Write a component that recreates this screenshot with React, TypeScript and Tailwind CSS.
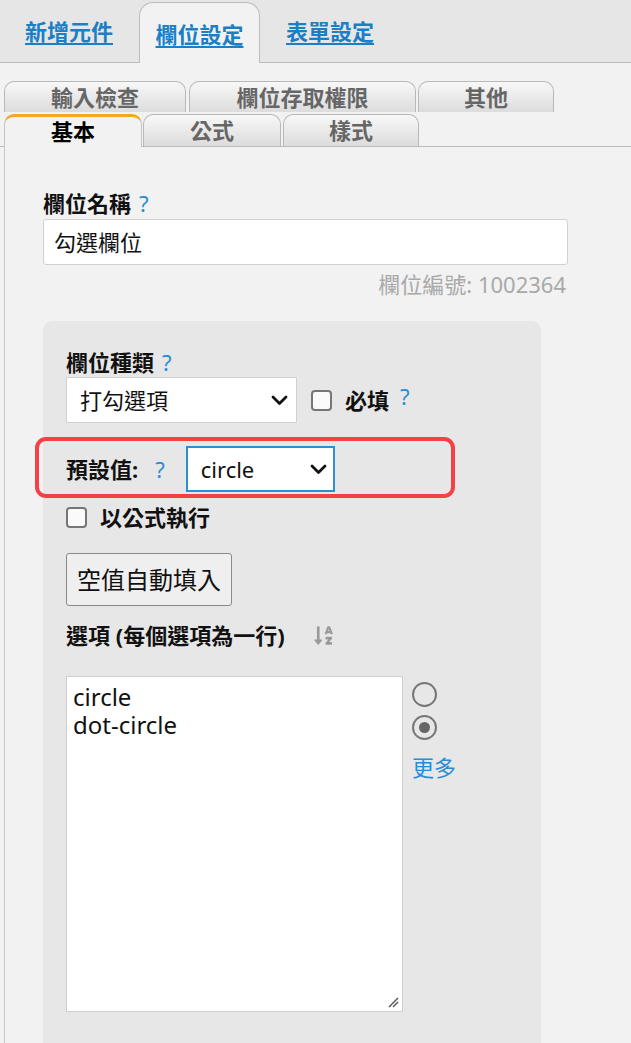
import { FaSortAlphaDown } from "react-icons/fa";

const Help = ({ className = "" }: { className?: string }) => (
  <span className={`text-[#2a8dd4] font-normal ${className}`}>?</span>
);

const Chevron = () => (
  <svg width="17" height="11" viewBox="0 0 17 11" className="shrink-0">
    <polyline
      points="2,2 8.5,8.5 15,2"
      fill="none"
      stroke="#111"
      strokeWidth="2.8"
      strokeLinecap="round"
      strokeLinejoin="round"
    />
  </svg>
);

const Checkbox = () => (
  <div className="w-[21px] h-[21px] rounded-[4px] border-2 border-[#767676] bg-[#fafafa] shrink-0" />
);

function SubTab({ label, w }: { label: string; w: string }) {
  return (
    <div
      className={`${w} h-full border border-b-0 border-[#b8b8b8] rounded-t-[10px] bg-linear-to-b from-[#f8f8f8] to-[#dcdcdc] text-[#666] font-bold text-[22px] leading-[30px] text-center`}
    >
      {label}
    </div>
  );
}

export default function App() {
  return (
    <div className="w-[631px] h-[1043px] overflow-hidden bg-[#f2f2f2] font-['Noto_Sans','Noto_Sans_CJK_TC',sans-serif] text-[#111]">
      {/* top tabs */}
      <div className="h-[63px] bg-[#e6e6e6] border-b border-[#bdbdbd] flex items-end pl-[25px]">
        <a className="mb-[17px] text-[22px] leading-[28px] font-semibold text-[#1a7fc4] underline underline-offset-[3px]">
          新增元件
        </a>
        <div className="ml-[26px] w-[121px] h-[61px] mb-[-1px] bg-[#f2f2f2] border border-b-0 border-[#bdbdbd] rounded-t-[14px] flex justify-center">
          <a className="mt-[17px] text-[22px] leading-[28px] font-semibold text-[#1a7fc4] underline underline-offset-[3px]">
            欄位設定
          </a>
        </div>
        <a className="ml-[26px] mb-[17px] text-[22px] leading-[28px] font-semibold text-[#1a7fc4] underline underline-offset-[3px]">
          表單設定
        </a>
      </div>

      {/* sub tabs */}
      <div className="mt-[18px] h-[31px] flex pl-[4px]">
        <SubTab label="輸入檢查" w="w-[182px]" />
        <div className="w-[3px]" />
        <SubTab label="欄位存取權限" w="w-[227px]" />
        <div className="w-[2px]" />
        <SubTab label="其他" w="w-[136px]" />
      </div>
      <div className="mt-[2px] h-[33px] flex items-end pl-[4px] border-b border-[#bbb]">
        <div className="relative w-[138px] h-[33px] mb-[-1px] border border-b-0 border-[#c4c4c4] border-t-[3px] border-t-[#f5a623] rounded-t-[10px] bg-[#f2f2f2] font-bold text-[22px] leading-[28px] text-center text-black">
          基本
        </div>
        <div className="w-[1px]" />
        <div className="h-[32px] flex">
          <SubTab label="公式" w="w-[138px]" />
        </div>
        <div className="w-[2px]" />
        <div className="h-[32px] flex">
          <SubTab label="樣式" w="w-[136px]" />
        </div>
      </div>

      {/* content */}
      <div className="ml-[4px] border-l border-[#c8c8c8] pl-[38px] pt-[42px] h-[900px]">
        <div className="flex items-center gap-[8px] font-bold text-[22px] leading-[28px]">
          欄位名稱 <Help />
        </div>
        <div className="mt-[2px] w-[525px] h-[46px] bg-white border border-[#d0d0d0] rounded-[3px] flex items-center pl-[10px] text-[22px]">
          勾選欄位
        </div>
        <div className="w-[525px] mt-[7px] pr-[2px] text-right text-[22px] leading-[24px] text-[#a9a9a9]">
          欄位編號: 1002364
        </div>

        {/* gray panel */}
        <div className="mt-[25px] w-[498px] h-[760px] bg-[#e7e7e7] rounded-[9px] pl-[23px] pt-[27px]">
          <div className="flex items-center gap-[8px] font-bold text-[22px] leading-[28px]">
            欄位種類 <Help />
          </div>
          <div className="mt-[1px] flex items-center">
            <div className="w-[231px] h-[46px] bg-white border border-[#d2d2d2] flex items-center justify-between pl-[13px] pr-[8px] text-[22px]">
              打勾選項
              <Chevron />
            </div>
            <div className="ml-[14px]">
              <Checkbox />
            </div>
            <span className="ml-[13px] font-bold text-[22px] leading-[28px]">必填</span>
            <Help className="ml-[11px] text-[22px] leading-[28px] -translate-y-[4px]" />
          </div>

          <div className="relative mt-[23px] h-[46px] flex items-center">
            <div className="absolute left-[-31px] top-[-9px] w-[420px] h-[61px] border-4 border-[#f24245] rounded-[11px] pointer-events-none" />
            <span className="font-bold text-[22px] leading-[28px]">預設值:</span>
            <Help className="ml-[17px] text-[22px] leading-[28px]" />
            <div className="ml-[21px] w-[149px] h-[46px] bg-white border-2 border-[#2b8fd3] flex items-center justify-between pl-[13px] pr-[6px] text-[22px]">
              circle
              <Chevron />
            </div>
          </div>

          <div className="mt-[11px] h-[28px] flex items-center">
            <Checkbox />
            <span className="ml-[13px] font-bold text-[22px] leading-[28px]">以公式執行</span>
          </div>

          <button className="mt-[22px] w-[166px] h-[53px] bg-[#efefef] border border-[#8a8a8a] rounded-[3px] text-[24px] leading-[30px] text-[#111]">
            空值自動填入
          </button>

          <div className="mt-[15px] h-[28px] flex items-center">
            <span className="font-bold text-[22px] leading-[28px]">選項 (每個選項為一行)</span>
            <FaSortAlphaDown className="ml-[28px] text-[#9a9a9a]" size={21} />
          </div>

          <div className="mt-[27px] flex items-start">
            <div className="relative w-[337px] h-[336px] bg-white border border-[#cfcfcf] pl-[6px] pt-[6px] text-[24px] leading-[28px] text-[#111] whitespace-pre-line">
              {"circle\ndot-circle"}
              <svg
                width="12"
                height="12"
                viewBox="0 0 12 12"
                className="absolute right-[3px] bottom-[3px]"
              >
                <line x1="2" y1="11" x2="11" y2="2" stroke="#555" strokeWidth="1.4" />
                <line x1="6" y1="11" x2="11" y2="6" stroke="#555" strokeWidth="1.4" />
              </svg>
            </div>
            <div className="ml-[9px] flex flex-col items-start">
              <div className="mt-[6px] w-[25px] h-[25px] rounded-full border-2 border-[#777]" />
              <div className="mt-[8px] w-[25px] h-[25px] rounded-full border-2 border-[#777] flex items-center justify-center">
                <div className="w-[11px] h-[11px] rounded-full bg-[#666]" />
              </div>
              <span className="mt-[13px] text-[22px] leading-[28px] text-[#2a8dd4]">更多</span>
            </div>
          </div>
        </div>
      </div>
    </div>
  );
}
